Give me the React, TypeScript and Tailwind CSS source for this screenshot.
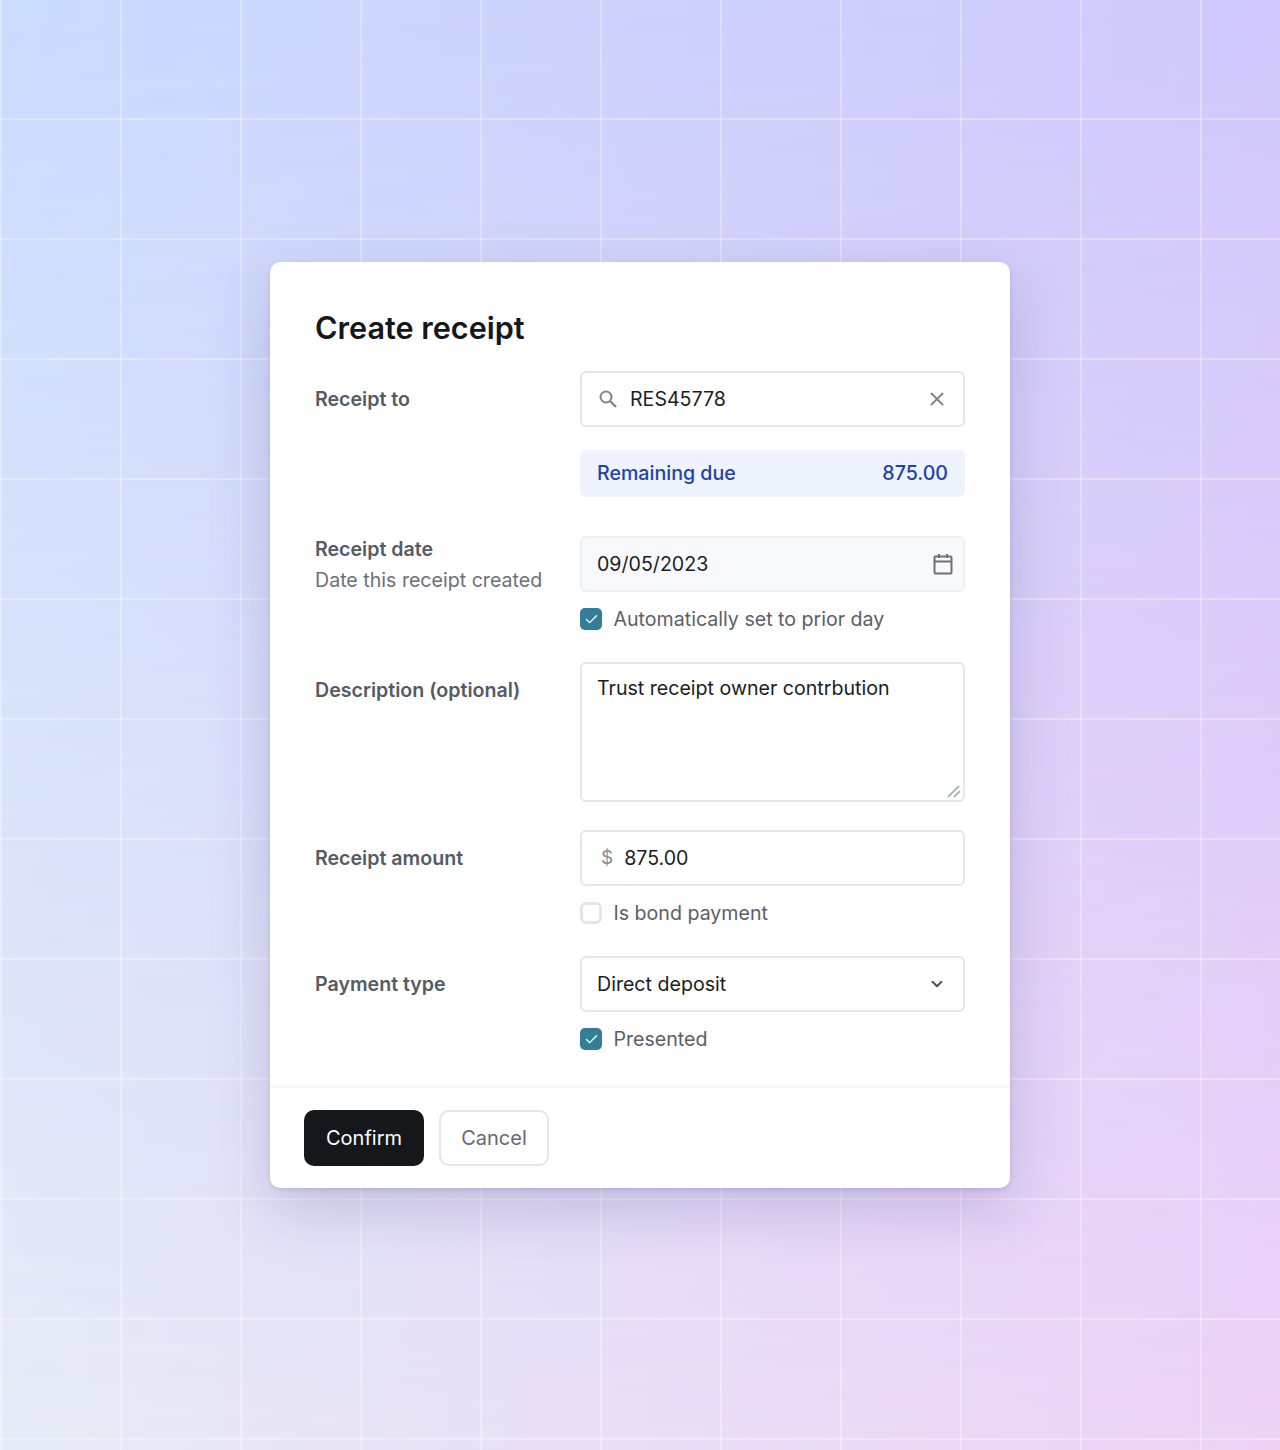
import React from 'react';
import { Check, ChevronDown, X } from 'lucide-react';

function CheckRow({ checked, label }: { checked?: boolean; label: string }) {
  return (
    <label className="mt-4 flex h-[22px] items-center gap-[11.5px] text-[19.6px] text-[#5a6068]">
      {checked ? (
        <span className="flex h-[22px] w-[22px] items-center justify-center rounded-[5px] bg-[#337d95]">
          <Check className="h-[15px] w-[15px] text-white" strokeWidth={2.25} />
        </span>
      ) : (
        <span className="h-[22px] w-[22px] rounded-[6px] border-[3px] border-[#e2e5ec] bg-white" />
      )}
      <span className="pt-px">{label}</span>
    </label>
  );
}

function SearchIcon() {
  return (
    <svg className="ml-[16px]" width="20" height="20" viewBox="0 0 20 20" fill="none" stroke="#80868d" strokeWidth="2">
      <circle cx="8" cy="8" r="5.5" />
      <path d="M12 12l6 6" strokeWidth="2.4" />
    </svg>
  );
}

function CalendarIcon() {
  return (
    <svg width="20" height="22" viewBox="0 0 20 22" fill="none" stroke="#6b7178" strokeWidth="2">
      <rect x="1.5" y="3.5" width="17" height="17" rx="1" />
      <path d="M1.5 8.5h17M6 1v4M14 1v4" />
    </svg>
  );
}

function ResizeHandle() {
  return (
    <svg className="absolute right-[4px] bottom-[4px]" width="14" height="14" viewBox="0 0 14 14" fill="none" stroke="#9a9fa6" strokeWidth="1.5">
      <path d="M1 13L12 2M7 13l6-6" />
    </svg>
  );
}

const inputBox = 'flex h-[56px] items-center rounded-[6px] border-2 border-[#e4e6ee] bg-white';
const labelText = 'text-[19.6px] font-semibold text-[#555b63]';

export default function App() {
  return (
    <div className="relative flex h-[1450px] w-full items-start justify-center overflow-hidden bg-[linear-gradient(to_right,#cbdcff,#d0c8fc)] pt-[262px] font-['Inter',sans-serif]">
      <div className="absolute inset-0 bg-[linear-gradient(to_right,#e7ebf7,#edd2f6)] [mask-image:linear-gradient(to_bottom,transparent,black)]" />
      <div className="absolute inset-0 bg-[linear-gradient(to_right,rgba(255,255,255,0.3)_2px,transparent_2px),linear-gradient(to_bottom,rgba(255,255,255,0.3)_2px,transparent_2px)] bg-[size:120px_120px] bg-[position:0_-2px]" />

      <div className="relative w-[740px] rounded-[10px] bg-white shadow-[0_20px_60px_rgba(70,60,130,0.22),0_2px_4px_rgba(70,60,130,0.15)]">
        <div className="px-[45px] pt-[45px]">
          <h1 className="text-[30.6px] leading-[42px] font-semibold text-[#14181b]">Create receipt</h1>

          <div className="mt-[22px] flex">
            <div className={`w-[265px] pt-[14px] leading-[28px] ${labelText}`}>Receipt to</div>
            <div className="w-[385px]">
              <div className={inputBox}>
                <SearchIcon />
                <input
                  readOnly
                  value="RES45778"
                  className="ml-[12px] min-w-0 flex-1 bg-transparent pt-[2px] text-[19.6px] text-[#1a1e21] outline-none"
                />
                <X className="mr-[15px] h-[22px] w-[22px] text-[#7d838a]" strokeWidth={2} />
              </div>
              <div className="mt-[23px] flex h-[47px] items-center justify-between rounded-[6px] bg-[#eff3fe] px-[17px] pt-px text-[19.6px] font-medium text-[#1d43a6]">
                <span>Remaining due</span>
                <span>875.00</span>
              </div>
            </div>
          </div>

          <div className="mt-[39px] flex">
            <div className="-mt-px w-[265px]">
              <div className={`leading-[28px] ${labelText}`}>Receipt date</div>
              <div className="mt-[3px] text-[19.6px] leading-[28px] text-[#6b7178]">Date this receipt created</div>
            </div>
            <div className="w-[385px]">
              <div className="flex h-[56px] items-center justify-between rounded-[6px] border-2 border-[#eef0f4] bg-[#f8f9fc] pr-[10px] pl-[15px]">
                <input readOnly value="09/05/2023" className="min-w-0 flex-1 bg-transparent pt-[2px] text-[19.6px] text-[#1a1e21] outline-none" />
                <CalendarIcon />
              </div>
              <CheckRow checked label="Automatically set to prior day" />
            </div>
          </div>

          <div className="mt-[32px] flex">
            <div className={`w-[265px] pt-[14px] leading-[28px] ${labelText}`}>Description (optional)</div>
            <div className="relative h-[140px] w-[385px]">
              <textarea
                readOnly
                defaultValue="Trust receipt owner contrbution"
                className="block h-full w-full resize-none rounded-[6px] border-2 border-[#e4e6ee] bg-white px-[15px] py-[10px] text-[19.6px] leading-[28px] text-[#1a1e21] outline-none"
              />
              <ResizeHandle />
            </div>
          </div>

          <div className="mt-[28px] flex">
            <div className={`w-[265px] pt-[14px] leading-[28px] ${labelText}`}>Receipt amount</div>
            <div className="w-[385px]">
              <div className={inputBox}>
                <span className="ml-[19px] text-[19px] text-[#868c94]">$</span>
                <input readOnly value="875.00" className="ml-[11px] min-w-0 flex-1 bg-transparent pt-[2px] text-[19.6px] text-[#1a1e21] outline-none" />
              </div>
              <CheckRow label="Is bond payment" />
            </div>
          </div>

          <div className="mt-[32px] flex">
            <div className={`w-[265px] pt-[14px] leading-[28px] ${labelText}`}>Payment type</div>
            <div className="w-[385px]">
              <div className={`${inputBox} justify-between pr-[17px] pl-[15px] text-[19.6px] text-[#1a1e21]`}>
                <span className="pt-[2px]">Direct deposit</span>
                <ChevronDown className="h-[18px] w-[18px] text-[#4b5158]" strokeWidth={2.5} />
              </div>
              <CheckRow checked label="Presented" />
            </div>
          </div>
        </div>

        <div className="mt-[36px] flex gap-[15px] border-t-2 border-[#f6f7f9] px-[34px] py-[22px]">
          <button className="h-[56px] w-[120px] rounded-[10px] bg-[#14181b] text-[20px] text-white">Confirm</button>
          <button className="h-[56px] w-[110px] rounded-[10px] border-2 border-[#e4e6ee] bg-white text-[20px] text-[#646a72]">Cancel</button>
        </div>
      </div>
    </div>
  );
}
